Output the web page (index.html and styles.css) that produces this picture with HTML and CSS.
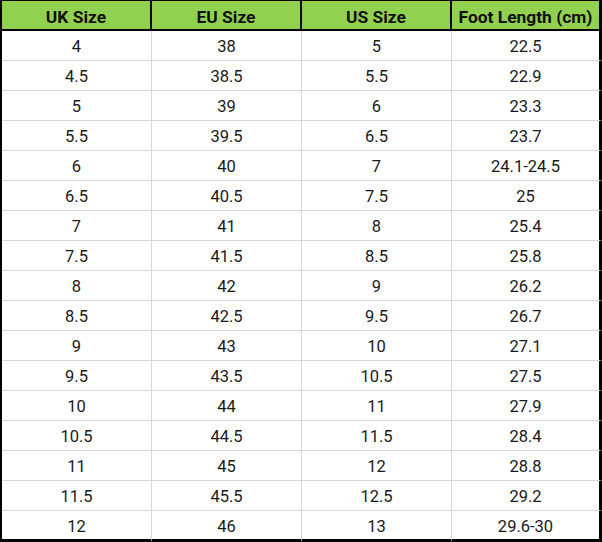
FILE: index.html
```html
<!DOCTYPE html>
<html lang="en">
<head>
<meta charset="utf-8">
<title>Shoe Size Chart</title>
<link rel="stylesheet" href="styles.css">
</head>
<body>
<div class="chart" role="table">
  <div class="cell head">UK Size</div>
  <div class="cell head">EU Size</div>
  <div class="cell head">US Size</div>
  <div class="cell head">Foot Length (cm)</div>

  <div class="cell">4</div><div class="cell">38</div><div class="cell">5</div><div class="cell">22.5</div>
  <div class="cell">4.5</div><div class="cell">38.5</div><div class="cell">5.5</div><div class="cell">22.9</div>
  <div class="cell">5</div><div class="cell">39</div><div class="cell">6</div><div class="cell">23.3</div>
  <div class="cell">5.5</div><div class="cell">39.5</div><div class="cell">6.5</div><div class="cell">23.7</div>
  <div class="cell">6</div><div class="cell">40</div><div class="cell">7</div><div class="cell">24.1-24.5</div>
  <div class="cell">6.5</div><div class="cell">40.5</div><div class="cell">7.5</div><div class="cell">25</div>
  <div class="cell">7</div><div class="cell">41</div><div class="cell">8</div><div class="cell">25.4</div>
  <div class="cell">7.5</div><div class="cell">41.5</div><div class="cell">8.5</div><div class="cell">25.8</div>
  <div class="cell">8</div><div class="cell">42</div><div class="cell">9</div><div class="cell">26.2</div>
  <div class="cell">8.5</div><div class="cell">42.5</div><div class="cell">9.5</div><div class="cell">26.7</div>
  <div class="cell">9</div><div class="cell">43</div><div class="cell">10</div><div class="cell">27.1</div>
  <div class="cell">9.5</div><div class="cell">43.5</div><div class="cell">10.5</div><div class="cell">27.5</div>
  <div class="cell">10</div><div class="cell">44</div><div class="cell">11</div><div class="cell">27.9</div>
  <div class="cell">10.5</div><div class="cell">44.5</div><div class="cell">11.5</div><div class="cell">28.4</div>
  <div class="cell">11</div><div class="cell">45</div><div class="cell">12</div><div class="cell">28.8</div>
  <div class="cell">11.5</div><div class="cell">45.5</div><div class="cell">12.5</div><div class="cell">29.2</div>
  <div class="cell last">12</div><div class="cell last">46</div><div class="cell last">13</div><div class="cell last">29.6-30</div>
</div>
</body>
</html>
```
FILE: styles.css
```css
* { box-sizing: border-box; }
html, body { margin: 0; padding: 0; background: #fff; }
body {
  width: 602px;
  height: 542px;
  font-family: Roboto, "Liberation Sans", Arial, sans-serif;
  color: #1a1a1a;
}
.chart {
  display: grid;
  grid-template-columns: 150px 150px 150px 150px;
  grid-template-rows: 30px repeat(16, 30px) 31px;
  border-left: 2px solid #000;
  border-top: 1px solid #000;
  width: 602px;
}
.cell {
  display: flex;
  align-items: center;
  justify-content: center;
  padding-top: 2px;
  font-size: 16.5px;
  border-right: 1px solid #d6d6d6;
  border-bottom: 1px solid #d6d6d6;
}
.cell:nth-child(4n) {
  border-right: 3px solid #000;
}
.cell.head {
  background: #92d050;
  font-weight: 700;
  font-size: 17.4px;
  color: #111;
  padding-top: 3px;
  border-right: 2px solid #000;
  border-bottom: 2px solid #000;
}
.cell.head:nth-child(4n) {
  border-right: 3px solid #000;
}
.cell.last {
  border-bottom: 3px solid #000;
}
```
